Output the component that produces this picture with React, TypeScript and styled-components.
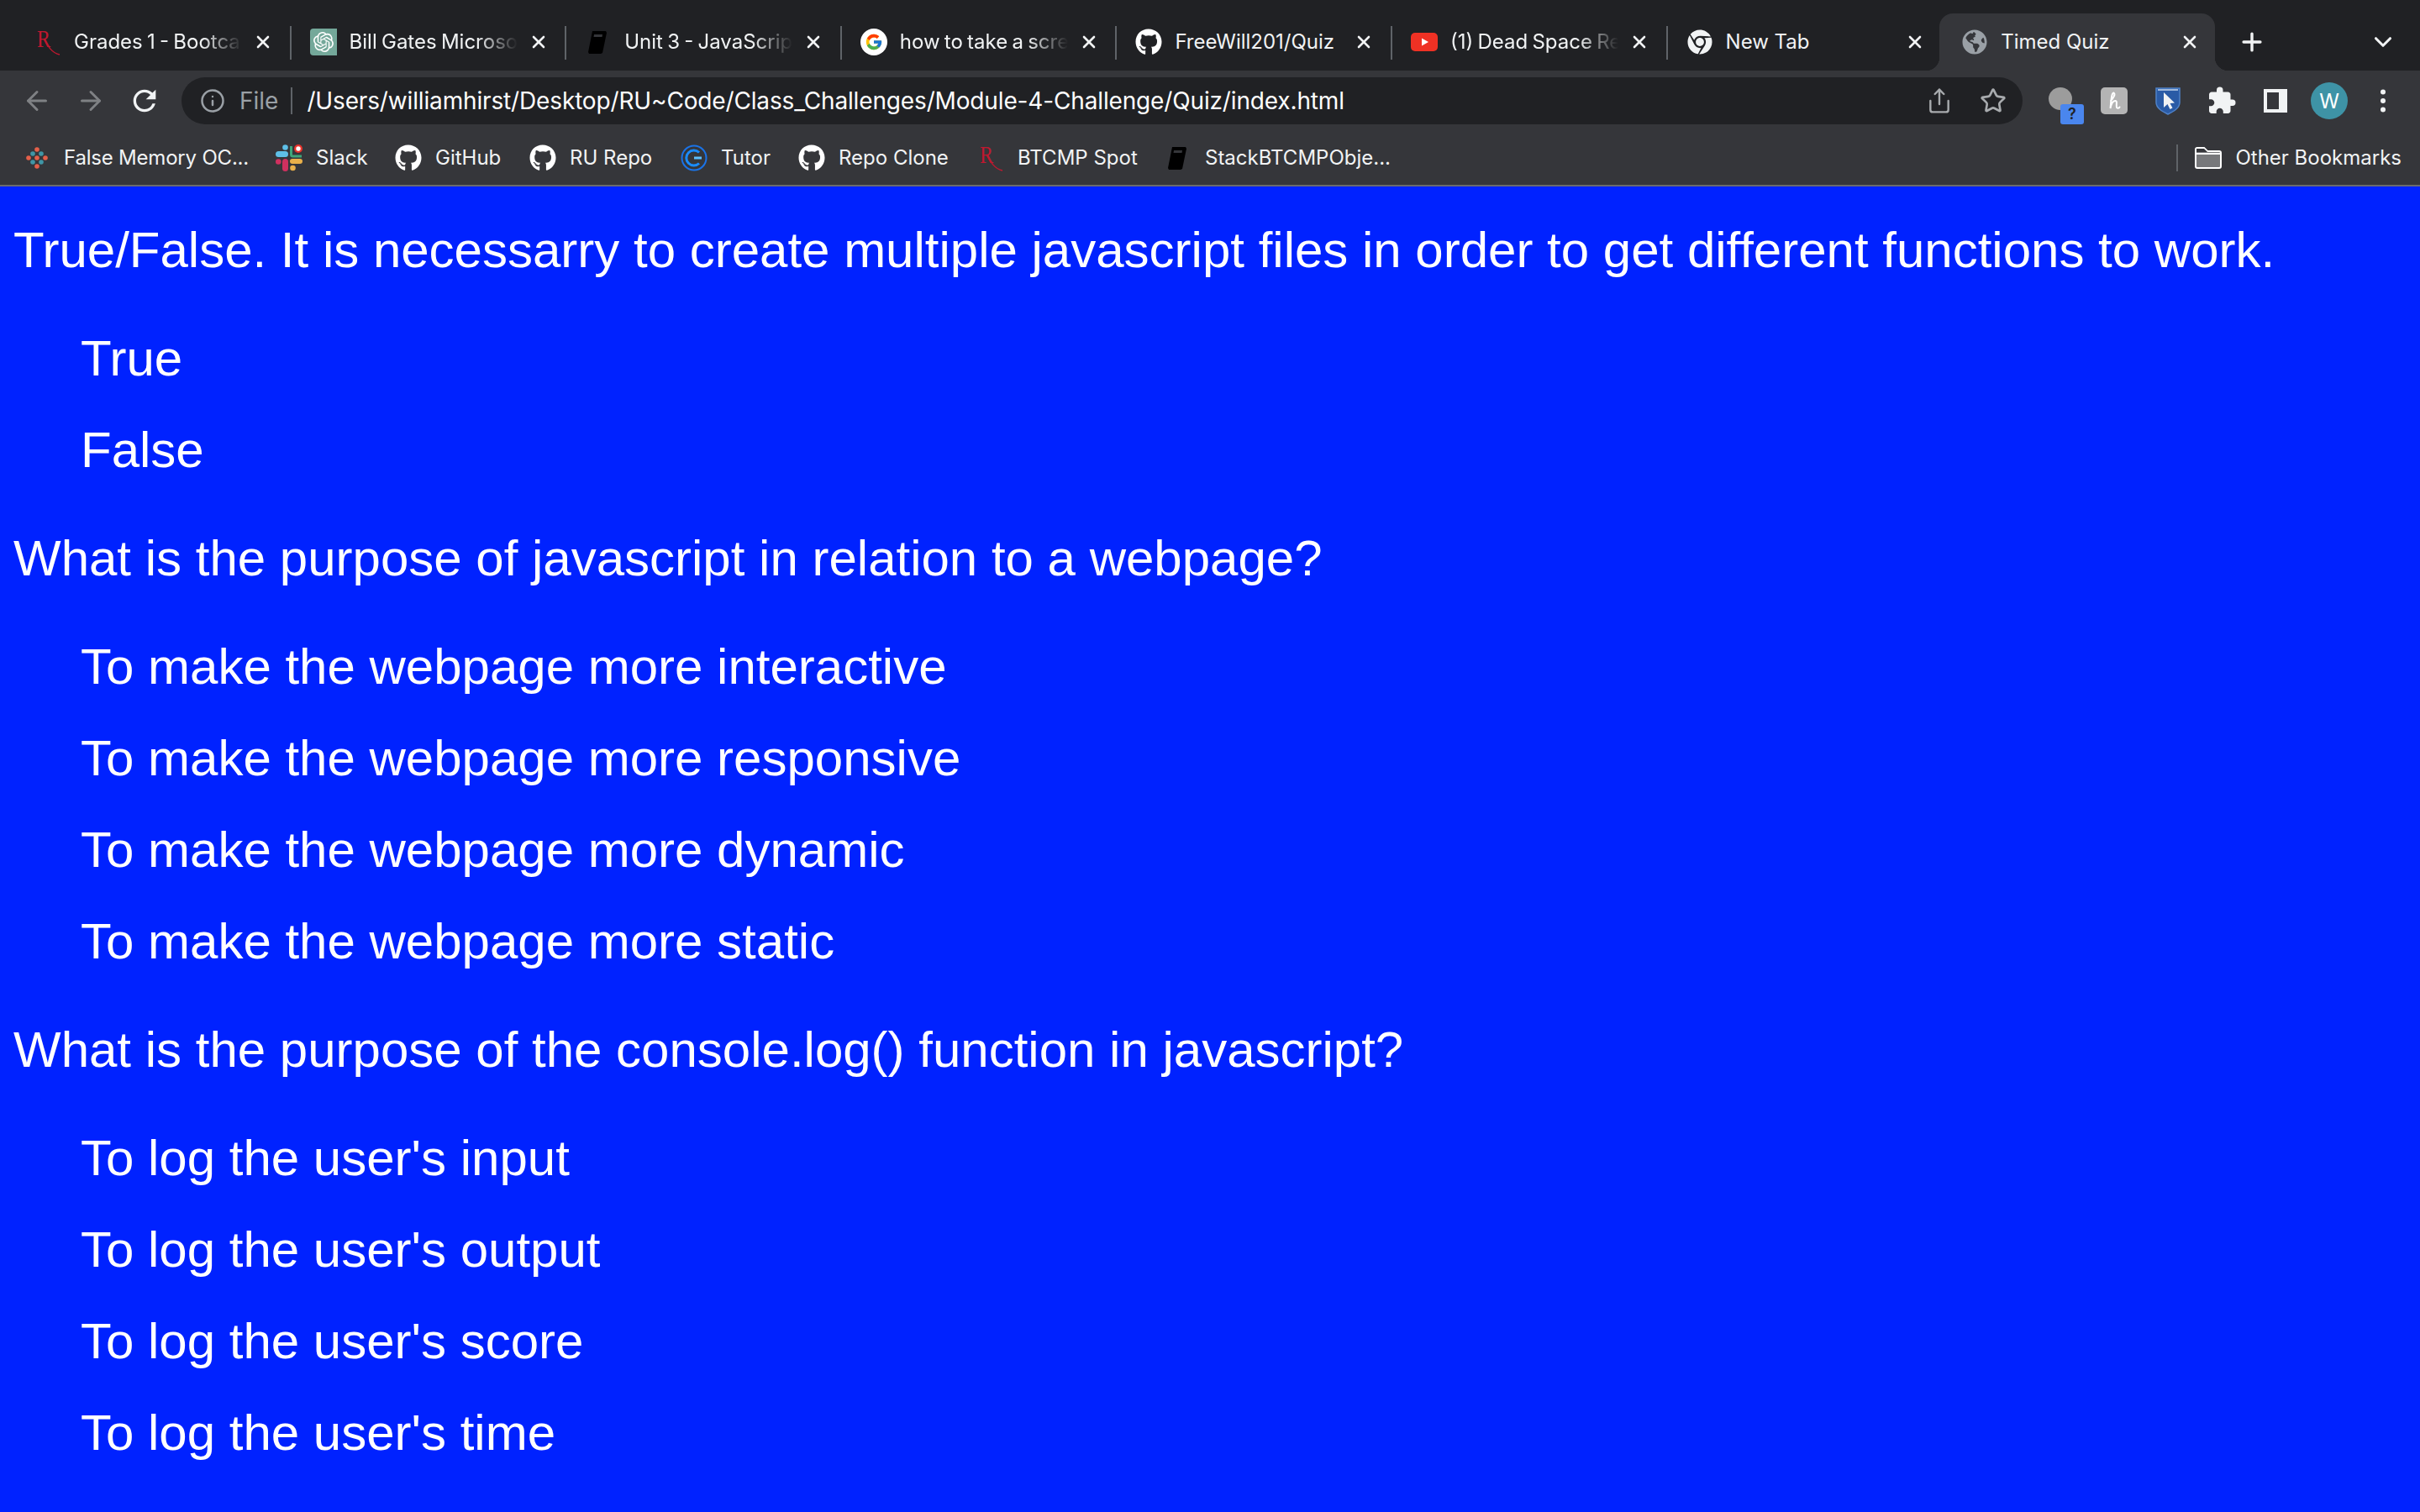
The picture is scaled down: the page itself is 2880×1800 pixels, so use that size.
import React from 'react'
import styled, { createGlobalStyle } from 'styled-components'
import { ArrowLeft, ArrowRight, Info, Share, Star, Plus, ChevronDown, X } from 'lucide-react'
import { FaGithub, FaChrome, FaGlobeAmericas } from 'react-icons/fa'
import { FcGoogle } from 'react-icons/fc'
import { MdRefresh, MdExtension } from 'react-icons/md'
import { SiOpenai } from 'react-icons/si'

const GlobalStyle = createGlobalStyle`
	html, body {
		margin: 0;
		padding: 0;
		height: 100%;
		background: #0022ff;
		overflow: hidden;
	}
	#root {
		height: 100%;
	}
`

const Page = styled.div`
	display: flex;
	flex-direction: column;
	height: 1800px;
	width: 2880px;
`

const Chrome = styled.header`
	background: #35363a;
	border-bottom: 2px solid #6a6b6e;
	font-family: Inter, 'Liberation Sans', sans-serif;
	color: #f1f3f4;
`

const TabStrip = styled.div`
	display: flex;
	align-items: flex-end;
	height: 84px;
	padding-left: 15px;
	background: #202124;
`

const Tab = styled.div<{ $active?: boolean; $sep?: boolean }>`
	position: relative;
	display: flex;
	align-items: center;
	flex: none;
	width: 327.6px;
	height: 68px;
	padding-left: 26px;
	box-sizing: border-box;
	border-radius: 16px 16px 0 0;
	background: ${p => (p.$active ? '#35363a' : 'transparent')};

	&::after {
		content: '';
		display: ${p => (p.$sep ? 'block' : 'none')};
		position: absolute;
		top: 15px;
		right: -4px;
		width: 2px;
		height: 40px;
		background: #5f6368;
	}
`

const TabCorner = styled.span<{ $side: 'left' | 'right' }>`
	position: absolute;
	bottom: 0;
	${p => p.$side}: -16px;
	width: 16px;
	height: 16px;
	background: radial-gradient(
		circle at ${p => (p.$side === 'left' ? '0 0' : '100% 0')},
		transparent 16px,
		#35363a 16.5px
	);
`

const Favicon = styled.span`
	display: flex;
	align-items: center;
	justify-content: center;
	flex: none;
	width: 32px;
	height: 32px;
`

const TabTitle = styled.span<{ $fade?: boolean }>`
	flex: none;
	width: 202px;
	margin-left: 15px;
	overflow: hidden;
	white-space: nowrap;
	font-size: 24px;
	line-height: 32px;
	word-spacing: ${p => (p.$fade ? '-1.5px' : '0')};
	${p =>
		p.$fade &&
		`
		-webkit-mask-image: linear-gradient(to right, #000 calc(100% - 50px), transparent 99%);
		mask-image: linear-gradient(to right, #000 calc(100% - 50px), transparent 99%);
	`}
`

const TabClose = styled.span`
	display: flex;
	align-items: center;
	justify-content: center;
	flex: none;
	width: 24px;
	height: 24px;
	margin-left: 11px;
	color: #f1f3f4;
`

const StripButton = styled.span<{ $width: number }>`
	display: flex;
	align-items: center;
	justify-content: center;
	flex: none;
	align-self: center;
	width: ${p => p.$width}px;
	height: 40px;
	margin-top: 16px;
	color: #f1f3f4;
`

const Toolbar = styled.div`
	display: flex;
	align-items: center;
	height: 56px;
	margin-top: 8px;
	padding: 0 12px;
`

const ToolButton = styled.span<{ $muted?: boolean }>`
	position: relative;
	display: flex;
	align-items: center;
	justify-content: center;
	flex: none;
	width: 64px;
	height: 56px;
	color: ${p => (p.$muted ? '#7f8184' : '#f1f3f4')};
`

const UrlBar = styled.div`
	display: flex;
	align-items: center;
	flex: 1;
	height: 56px;
	margin: 0 13px 0 12px;
	padding-left: 22px;
	border-radius: 28px;
	background: #202124;
`

const SiteLabel = styled.span`
	margin-left: 17px;
	padding-right: 15px;
	border-right: 2px solid #5f6368;
	font-size: 28px;
	line-height: 32px;
	color: #9aa0a6;
`

const UrlText = styled.span`
	flex: 1;
	margin-left: 17px;
	font-size: 28px;
	letter-spacing: -0.15px;
	white-space: nowrap;
	color: #fff;
`

const UrlAction = styled.span`
	display: flex;
	align-items: center;
	justify-content: center;
	flex: none;
	width: 64px;
	height: 56px;
	color: #a8abae;
`

const UrlActions = styled.div`
	display: flex;
	margin-right: 3px;
`

const GreyDot = styled.span`
	width: 28px;
	height: 27px;
	margin-top: -6px;
	border-radius: 50%;
	background: #9c9c9c;
`

const HelpBadge = styled.span`
	position: absolute;
	top: 32px;
	left: 32px;
	width: 28px;
	height: 24px;
	border-radius: 3px;
	background: #4a86ee;
	color: #202124;
	font-size: 18px;
	font-weight: 600;
	line-height: 24px;
	text-align: center;
`

const Avatar = styled.span`
	display: flex;
	align-items: center;
	justify-content: center;
	width: 44px;
	height: 44px;
	border-radius: 50%;
	background: #3e93a6;
	color: #fff;
	font-size: 24px;
`

const BookmarkBar = styled.div`
	display: flex;
	align-items: center;
	height: 72px;
	padding: 7px 12px 0 12px;
	box-sizing: border-box;
`

const Bookmark = styled.span`
	display: flex;
	align-items: center;
	gap: 16px;
	flex: none;
	padding: 0 16px;
	font-size: 24px;
	line-height: 32px;
	white-space: nowrap;
`

const BookmarkLabel = styled.span<{ $width: number }>`
	width: ${p => p.$width}px;
	letter-spacing: ${p => (p.$width === 220 ? '-0.2px' : '0')};
`

const OtherBookmarks = styled(Bookmark)`
	margin-left: auto;
	padding: 0 10px 0 20px;
	border-left: 2px solid #5f6368;
`

const Quiz = styled.main`
	flex: 1;
	padding: 41px 16px 0;
	background: #0022ff;
	color: #fff;
	font-family: 'Liberation Sans', Arial, sans-serif;
	font-size: 60px;
	line-height: 69px;
`

const QuestionBlock = styled.section`
	margin-bottom: 60px;
`

const Question = styled.p`
	margin: 0 0 60px;
	white-space: nowrap;
`

const Answers = styled.ul`
	display: flex;
	flex-direction: column;
	gap: 40px;
	margin: 0;
	padding: 0 0 0 80px;
	list-style: none;
`

const Rutgers = () => (
	<svg width="32" height="32" viewBox="0 0 32 32" overflow="visible">
		<text x="3" y="22" fontFamily="'Liberation Serif', serif" fontSize="30" fill="#c0182f" textLength="16" lengthAdjust="spacingAndGlyphs">
			R
		</text>
		<path d="M11 12 C15 19 20 29 30 31" fill="none" stroke="#c0182f" strokeWidth="1.4" />
	</svg>
)

const OpenAi = () => (
	<svg width="32" height="32" viewBox="0 0 32 32">
		<path d="M4 0h28v32H4a4 4 0 0 1-4-4V4a4 4 0 0 1 4-4z" fill="#74a89a" />
		<SiOpenai x="4" y="4" size={24} color="#fff" />
	</svg>
)

const Notebook = () => (
	<svg width="32" height="32" viewBox="0 0 32 32">
		<path d="M9 3h16l1 2-5 24-2 1H5l-1-2z" fill="#000" />
		<path d="M11 7h10l-.5 3H10.500z" fill="#35363a" />
	</svg>
)

const Google = () => (
	<svg width="32" height="32" viewBox="0 0 32 32">
		<circle cx="16" cy="16" r="16" fill="#fff" />
		<FcGoogle x="5" y="5" size={22} />
	</svg>
)

const YouTube = () => (
	<svg width="32" height="32" viewBox="0 0 32 32">
		<rect x="0" y="5" width="32" height="22" rx="5" fill="#ef3124" />
		<path d="M13 11.500v9l8-4.500z" fill="#fff" />
	</svg>
)

const Slack = () => (
	<svg width="32" height="32" viewBox="0 0 32 32">
		<rect x="0" y="8" width="15" height="7" rx="3.500" fill="#5ec0e8" />
		<circle cx="11.500" cy="3.500" r="3.300" fill="#5ec0e8" />
		<path d="M18.500 2v10a2 2 0 0 0 2 2H31" fill="none" stroke="#3fa67a" strokeWidth="3" />
		<circle cx="27" cy="5" r="5" fill="#e8342b" />
		<circle cx="27" cy="5" r="2.700" fill="#fff" />
		<circle cx="3.300" cy="20.500" r="3.300" fill="#d0305f" />
		<rect x="8" y="17" width="7" height="15" rx="3.500" fill="#d0305f" />
		<rect x="17" y="17" width="15" height="6" rx="3" fill="#e9b04a" />
		<circle cx="20.500" cy="28" r="3.300" fill="#e9b04a" />
	</svg>
)

const DOTS = [
	[16, 6, '#e5604a'],
	[6, 16, '#e5604a'],
	[16, 16, '#e5604a'],
	[26, 16, '#e5604a'],
	[16, 26, '#e5604a'],
	[11, 11, '#3f96a6'],
	[21, 11, '#3f96a6'],
	[11, 21, '#3f96a6'],
	[21, 21, '#3f96a6'],
] as const

const DotLogo = () => (
	<svg width="32" height="32" viewBox="0 0 32 32">
		{DOTS.map(([cx, cy, fill]) => (
			<circle key={`${cx}-${cy}`} cx={cx} cy={cy} r="2.800" fill={fill} />
		))}
	</svg>
)

const Tutor = () => (
	<svg width="32" height="32" viewBox="0 0 32 32" fill="none">
		<circle cx="16" cy="16" r="14.500" stroke="#1a73e8" strokeWidth="2" />
		<path d="M22 9.500a9 9 0 1 0 0 13" stroke="#1a8cff" strokeWidth="3" />
		<path d="M16 16h9" stroke="#5cc0ff" strokeWidth="3" />
	</svg>
)

const Folder = () => (
	<svg width="32" height="26" viewBox="0 0 32 26">
		<path d="M1 3a2 2 0 0 1 2-2h8l4 4h14a2 2 0 0 1 2 2v16a2 2 0 0 1-2 2H3a2 2 0 0 1-2-2z" fill="#77787b" stroke="#fff" strokeWidth="2" />
		<path d="M1 8h30" stroke="#fff" strokeWidth="2" />
		<path d="M2 2h9l4 4H2z" fill="#35363a" />
	</svg>
)

const Kite = () => (
	<svg width="32" height="32" viewBox="0 0 32 32">
		<rect width="32" height="32" rx="5" fill="#b4b4b4" />
		<path d="M12 16c3-3 6-8 3.500-9.500C13 6 12.500 15 11.500 25c1-5 3-9 6-9 3 0 0 7 2 8.500 1 .7 2.500 0 3-1" fill="none" stroke="#fff" strokeWidth="2" strokeLinecap="round" />
	</svg>
)

const Shield = () => (
	<svg width="30" height="33" viewBox="0 0 30 33">
		<path d="M1 1h28v17c0 7-8 11-14 14C9 29 1 25 1 18z" fill="#2a5ba6" stroke="#4f82c8" strokeWidth="1.500" />
		<path d="M3 3h24" stroke="#c9d8ee" strokeWidth="1.500" />
		<path d="M10 6v18l4.500-4 3 6 3-1.500-3-5.500 5.500-.5z" fill="#f1f3f4" />
	</svg>
)

const SidePanel = () => (
	<svg width="28" height="28" viewBox="0 0 28 28">
		<rect width="28" height="28" fill="#f1f3f4" />
		<rect x="4" y="4" width="14" height="20" fill="#35363a" />
	</svg>
)

const MoreDots = () => (
	<svg width="8" height="28" viewBox="0 0 8 28" fill="#f1f3f4">
		<circle cx="4" cy="3.500" r="3" />
		<circle cx="4" cy="14" r="3" />
		<circle cx="4" cy="24.500" r="3" />
	</svg>
)

const TABS = [
	{ title: 'Grades 1 - Bootca', icon: <Rutgers />, fade: true },
	{ title: 'Bill Gates Microso', icon: <OpenAi />, fade: true },
	{ title: 'Unit 3 - JavaScrip', icon: <Notebook />, fade: true },
	{ title: 'how to take a scre', icon: <Google />, fade: true },
	{ title: 'FreeWill201/Quiz', icon: <FaGithub size={32} color="#fff" /> },
	{ title: '(1) Dead Space Re', icon: <YouTube />, fade: true },
	{ title: 'New Tab', icon: <FaChrome size={30} color="#f1f3f4" /> },
	{ title: 'Timed Quiz', icon: <FaGlobeAmericas size={30} color="#9aa0a6" />, active: true },
]

const BOOKMARKS = [
	{ label: 'False Memory OC...', width: 220, icon: <DotLogo /> },
	{ label: 'Slack', width: 62, icon: <Slack /> },
	{ label: 'GitHub', width: 80, icon: <FaGithub size={32} color="#fff" /> },
	{ label: 'RU Repo', width: 100, icon: <FaGithub size={32} color="#fff" /> },
	{ label: 'Tutor', width: 60, icon: <Tutor /> },
	{ label: 'Repo Clone', width: 133, icon: <FaGithub size={32} color="#fff" /> },
	{ label: 'BTCMP Spot', width: 143, icon: <Rutgers /> },
	{ label: 'StackBTCMPObje...', width: 222, icon: <Notebook /> },
]

const QUESTIONS = [
	{
		text: 'True/False. It is necessarry to create multiple javascript files in order to get different functions to work.',
		answers: ['True', 'False'],
	},
	{
		text: 'What is the purpose of javascript in relation to a webpage?',
		answers: [
			'To make the webpage more interactive',
			'To make the webpage more responsive',
			'To make the webpage more dynamic',
			'To make the webpage more static',
		],
	},
	{
		text: 'What is the purpose of the console.log() function in javascript?',
		answers: ["To log the user's input", "To log the user's output", "To log the user's score", "To log the user's time"],
	},
]

const App: React.FC = () => {
	return (
		<Page>
			<GlobalStyle />
			<Chrome>
				<TabStrip>
					{TABS.map((tab, i) => (
						<Tab key={tab.title} $active={tab.active} $sep={i < 6}>
							{tab.active && <TabCorner $side="left" />}
							{tab.active && <TabCorner $side="right" />}
							<Favicon>{tab.icon}</Favicon>
							<TabTitle $fade={tab.fade}>{tab.title}</TabTitle>
							<TabClose>
								<X size={26} strokeWidth={2.6} />
							</TabClose>
						</Tab>
					))}
					<StripButton $width={88}>
						<Plus size={34} strokeWidth={2.4} />
					</StripButton>
					<StripButton $width={224}>
						<ChevronDown size={34} strokeWidth={2.2} />
					</StripButton>
				</TabStrip>
				<Toolbar>
					<ToolButton $muted>
						<ArrowLeft size={36} strokeWidth={2} />
					</ToolButton>
					<ToolButton $muted>
						<ArrowRight size={36} strokeWidth={2} />
					</ToolButton>
					<ToolButton>
						<MdRefresh size={40} />
					</ToolButton>
					<UrlBar>
						<Info size={30} strokeWidth={2} color="#9aa0a6" />
						<SiteLabel>File</SiteLabel>
						<UrlText>/Users/williamhirst/Desktop/RU~Code/Class_Challenges/Module-4-Challenge/Quiz/index.html</UrlText>
						<UrlActions>
							<UrlAction>
								<Share size={32} strokeWidth={1.8} />
							</UrlAction>
							<UrlAction>
								<Star size={32} strokeWidth={2} />
							</UrlAction>
						</UrlActions>
					</UrlBar>
					<ToolButton>
						<GreyDot />
						<HelpBadge>?</HelpBadge>
					</ToolButton>
					<ToolButton>
						<Kite />
					</ToolButton>
					<ToolButton>
						<Shield />
					</ToolButton>
					<ToolButton>
						<MdExtension size={36} />
					</ToolButton>
					<ToolButton>
						<SidePanel />
					</ToolButton>
					<ToolButton>
						<Avatar>W</Avatar>
					</ToolButton>
					<ToolButton>
						<MoreDots />
					</ToolButton>
				</Toolbar>
				<BookmarkBar>
					{BOOKMARKS.map(item => (
						<Bookmark key={item.label}>
							{item.icon}
							<BookmarkLabel $width={item.width}>{item.label}</BookmarkLabel>
						</Bookmark>
					))}
					<OtherBookmarks>
						<Folder />
						Other Bookmarks
					</OtherBookmarks>
				</BookmarkBar>
			</Chrome>
			<Quiz>
				{QUESTIONS.map(q => (
					<QuestionBlock key={q.text}>
						<Question>{q.text}</Question>
						<Answers>
							{q.answers.map(a => (
								<li key={a}>{a}</li>
							))}
						</Answers>
					</QuestionBlock>
				))}
			</Quiz>
		</Page>
	)
}

export default App
